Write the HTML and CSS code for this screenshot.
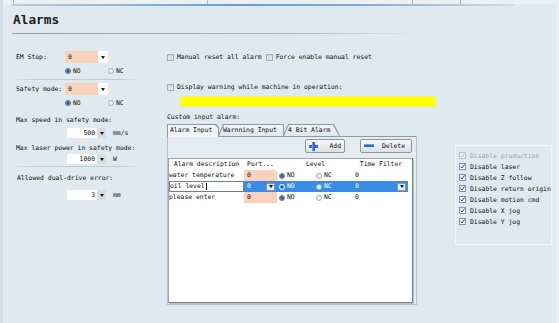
FILE: index.html
```html
<!DOCTYPE html>
<html lang="en">
<head>
  <meta charset="UTF-8" />
  <meta name="viewport" content="width=device-width, initial-scale=1.0" />
  <title>Alarms</title>
  <link rel="stylesheet" href="styles.css">
</head>
<body>
  <div class="frame">
    <!-- parent tab strip, cut off -->
    <div class="topbar">
      <span class="seg-a"></span>
      <span class="seg-b"></span>
      <span class="seg-c"></span>
      <span class="seg-d"></span>
    </div>
    <div class="topline"></div>

    <h1 class="title">Alarms</h1>
    <div class="title-rule"></div>

    <div class="content">
      <!-- Left: safety settings -->
      <div class="col-left">
        <div class="field-row">
          <span class="label">EM Stop:</span>
          <div class="select"><span class="value">0</span><span class="arrow"><i class="tri"></i></span></div>
        </div>
        <div class="radio-row">
          <span class="radio"><i class="dot on"></i>NO</span>
          <span class="radio"><i class="dot"></i>NC</span>
        </div>
        <div class="sep"></div>

        <div class="field-row gap-3">
          <span class="label">Safety mode:</span>
          <div class="select"><span class="value">0</span><span class="arrow"><i class="tri"></i></span></div>
        </div>
        <div class="radio-row gap-1">
          <span class="radio"><i class="dot on"></i>NO</span>
          <span class="radio"><i class="dot"></i>NC</span>
        </div>

        <div class="text-row gap-5">Max speed in safety mode:</div>
        <div class="spin-row gap-2">
          <div class="spin"><span class="value">500</span><span class="arrow"><i class="tri"></i></span></div>
          <span class="unit">mm/s</span>
        </div>

        <div class="text-row gap-4">Max laser power in safety mode:</div>
        <div class="spin-row">
          <div class="spin"><span class="value">1000</span><span class="arrow"><i class="tri"></i></span></div>
          <span class="unit">W</span>
        </div>
        <div class="sep wide gap-5"></div>

        <div class="text-row gap-5 indent">Allowed dual-drive error:</div>
        <div class="spin-row gap-6">
          <div class="spin"><span class="value">3</span><span class="arrow"><i class="tri"></i></span></div>
          <span class="unit">mm</span>
        </div>
      </div>

      <!-- Middle: reset options and custom alarms -->
      <div class="col-mid">
        <div class="check-row">
          <span class="check"><i class="box"></i>Manual reset all alarm</span>
          <span class="check"><i class="box"></i>Force enable manual reset</span>
        </div>
        <div class="check-row gap-18">
          <span class="check"><i class="box"></i>Display warning while machine in operation:</span>
        </div>
        <div class="warn-bar"></div>
        <div class="caption">Custom input alarm:</div>

        <div class="tabs">
          <div class="tab tab-first active"><span>Alarm Input</span></div>
          <div class="tab tab-mid"><span>Warnning Input</span></div>
          <div class="tab tab-last"><span>4 Bit Alarm</span></div>
        </div>
        <div class="tab-panel">
          <div class="btn-row">
            <button class="btn btn-add">
              <svg width="9" height="9" viewBox="0 0 9 9"><rect x="3" y="0" width="3" height="9" fill="#2b6bd3"/><rect x="0" y="3" width="9" height="3" fill="#2b6bd3"/><rect x="3" y="0" width="1" height="9" fill="#6f9fe8"/></svg>
              <span>Add</span>
            </button>
            <button class="btn btn-del">
              <svg width="10" height="4" viewBox="0 0 10 4"><rect x="0" y="0" width="10" height="3" fill="#2b6bd3"/><rect x="0" y="0" width="10" height="1" fill="#6f9fe8"/></svg>
              <span>Delete</span>
            </button>
          </div>

          <div class="grid">
            <div class="row head">
              <span class="c-desc">Alarm description</span>
              <span class="c-port">Port...</span>
              <span class="c-level">Level</span>
              <span class="c-time">Time Filter</span>
            </div>
            <div class="row">
              <span class="c-desc">water temperature</span>
              <span class="c-port pink">0</span>
              <span class="c-level"><span class="radio"><i class="dot on"></i>NO</span><span class="radio"><i class="dot"></i>NC</span></span>
              <span class="c-time">0</span>
            </div>
            <div class="row selected">
              <span class="c-desc edit">oil level<i class="caret"></i></span>
              <span class="c-port">0<span class="drop"><i class="tri"></i></span></span>
              <span class="c-level"><span class="radio"><i class="dot focus"></i>NO</span><span class="radio"><i class="dot"></i>NC</span></span>
              <span class="c-time">0<span class="drop"><i class="tri"></i></span></span>
            </div>
            <div class="row">
              <span class="c-desc">please enter</span>
              <span class="c-port pink">0</span>
              <span class="c-level"><span class="radio"><i class="dot on"></i>NO</span><span class="radio"><i class="dot"></i>NC</span></span>
              <span class="c-time">0</span>
            </div>
          </div>
        </div>
      </div>

      <!-- Right: actions disabled on alarm -->
      <div class="col-right">
        <div class="opt disabled"><i class="tick-box"><svg width="5" height="5" viewBox="0 0 5 5"><path d="M0.5 2.5 L2 4 L4.5 0.5" fill="none" stroke="#b7c0c7" stroke-width="1"/></svg></i>Disable production</div>
        <div class="opt"><i class="tick-box"><svg width="5" height="5" viewBox="0 0 5 5"><path d="M0.5 2.5 L2 4 L4.5 0.5" fill="none" stroke="#2c4d7a" stroke-width="1"/></svg></i>Disable laser</div>
        <div class="opt"><i class="tick-box"><svg width="5" height="5" viewBox="0 0 5 5"><path d="M0.5 2.5 L2 4 L4.5 0.5" fill="none" stroke="#2c4d7a" stroke-width="1"/></svg></i>Disable Z follow</div>
        <div class="opt"><i class="tick-box"><svg width="5" height="5" viewBox="0 0 5 5"><path d="M0.5 2.5 L2 4 L4.5 0.5" fill="none" stroke="#2c4d7a" stroke-width="1"/></svg></i>Disable return origin</div>
        <div class="opt"><i class="tick-box"><svg width="5" height="5" viewBox="0 0 5 5"><path d="M0.5 2.5 L2 4 L4.5 0.5" fill="none" stroke="#2c4d7a" stroke-width="1"/></svg></i>Disable motion cmd</div>
        <div class="opt"><i class="tick-box"><svg width="5" height="5" viewBox="0 0 5 5"><path d="M0.5 2.5 L2 4 L4.5 0.5" fill="none" stroke="#2c4d7a" stroke-width="1"/></svg></i>Disable X jog</div>
        <div class="opt"><i class="tick-box"><svg width="5" height="5" viewBox="0 0 5 5"><path d="M0.5 2.5 L2 4 L4.5 0.5" fill="none" stroke="#2c4d7a" stroke-width="1"/></svg></i>Disable Y jog</div>
      </div>
    </div>
  </div>
</body>
</html>
```

FILE: styles.css
```css
* {
  box-sizing: border-box;
}

body {
  margin: 0;
  background: #d3dfe6;
  font-family: "DejaVu Sans Mono", "Liberation Mono", monospace;
  font-size: 6.4px;
  color: #0d0d0d;
}

i {
  display: block;
  font-style: normal;
}

.frame {
  width: 559px;
  height: 323px;
  border-left: 3px solid #d3dfe6;
  border-right: 3px solid #e8eff3;
  background: #dfeaf0;
  overflow: hidden;
}

/* top strip */
.topbar {
  display: flex;
  height: 4px;
  background: #eaf1f5;
}

.topbar span {
  border-right: 1px solid #aab7c0;
}

.seg-a { width: 11px; }
.seg-b { width: 194px; }
.seg-c { width: 205px; }
.seg-d { width: 48px; }

.topline {
  height: 2px;
  margin: 0 42px 0 9px;
  background: linear-gradient(90deg, #b7cddd, #6f9cc6 45%, #86abcd 70%, #cfdde7);
}

.title {
  margin: 7px 0 0 10px;
  height: 14px;
  font-size: 12.8px;
  line-height: 14px;
  font-weight: bold;
  color: #1b1b1b;
}

.title-rule {
  margin: 6px 0 0 9px;
  width: 408px;
  height: 1px;
  background: linear-gradient(90deg, #8ea2ad, #a5b6c0 70%, rgba(165, 182, 192, 0));
}

.content {
  display: flex;
  margin-top: 17px;
  padding-left: 13px;
}

/* spacing helpers */
.gap-1 { margin-top: 1px; }
.gap-2 { margin-top: 2px; }
.gap-3 { margin-top: 3px; }
.gap-4 { margin-top: 4px; }
.gap-5 { margin-top: 5px; }
.gap-6 { margin-top: 6px; }
.gap-18 { margin-top: 18px; }

/* left column */
.col-left {
  width: 151px;
}

.field-row {
  display: flex;
  align-items: center;
  height: 12px;
}

.field-row .label {
  width: 49px;
}

.select {
  display: flex;
  width: 43px;
  height: 12px;
}

.select .value {
  width: 33px;
  padding-left: 3px;
  line-height: 12px;
  background: #fbd3bd;
}

.select .arrow,
.spin .arrow {
  flex: 1;
  display: flex;
  align-items: center;
  justify-content: center;
  background: #fff;
}

.tri {
  width: 0;
  height: 0;
  border-left: 2.5px solid transparent;
  border-right: 2.5px solid transparent;
  border-top: 3px solid #111;
}

.radio-row {
  display: flex;
  align-items: center;
  height: 12px;
  margin-top: 2px;
  padding-left: 49px;
}

.radio-row .radio {
  width: 43px;
}

.radio {
  display: flex;
  align-items: center;
  gap: 2px;
}

.dot {
  width: 6px;
  height: 6px;
  border-radius: 50%;
  border: 1px solid #a3adb5;
  background: #eef1f3;
}

.dot.on {
  border-color: #59728c;
  background: radial-gradient(circle, #3d5d82 0 40%, #87a0b8 75%, #c9d5df);
}

.dot.focus {
  border-color: #fff;
  background: radial-gradient(circle, #21508e 0 35%, #3a8de6 45%);
}

.sep {
  width: 122px;
  height: 1px;
  margin-top: 2px;
  background: linear-gradient(90deg, rgba(190, 205, 214, 0.3), #bfccd4 15%, #bfccd4 85%, rgba(190, 205, 214, 0));
}

.sep.wide {
  width: 125px;
}

.text-row {
  height: 12px;
  line-height: 12px;
}

.text-row.indent {
  padding-left: 1px;
}

.spin-row {
  display: flex;
  align-items: center;
  height: 10px;
  padding-left: 51px;
}

.spin {
  display: flex;
  width: 39px;
  height: 10px;
}

.spin .value {
  width: 30px;
  padding-right: 2px;
  line-height: 10px;
  text-align: right;
  background: #fff;
}

.spin .arrow {
  background: #dadee1;
}

.unit {
  margin-left: 7px;
}

/* middle column */
.col-mid {
  width: 270px;
}

.check-row {
  display: flex;
  align-items: center;
  height: 12px;
}

.check {
  display: flex;
  align-items: center;
  gap: 3px;
  margin-right: 4px;
}

.box {
  width: 7px;
  height: 7px;
  border: 1px solid #a2abb1;
  background: linear-gradient(#d3d8dc, #e9ecee);
}

.warn-bar {
  width: 256px;
  height: 11px;
  margin: 3px 0 0 13px;
  background: #ffff00;
  border: 1px solid #f1f16a;
}

.caption {
  height: 12px;
  margin-top: 4px;
  line-height: 12px;
}

.tabs {
  display: flex;
  align-items: flex-end;
  height: 12px;
  margin-top: 1px;
}

.tab {
  height: 12px;
  padding: 1px 1px 0 1px;
  background: #8e9ba4;
}

.tab span {
  display: block;
  height: 11px;
  line-height: 11px;
  background: linear-gradient(#eef3f6, #dfe8ee);
}

.tab.active {
  position: relative;
  z-index: 1;
  height: 13px;
  margin-bottom: -1px;
}

.tab.active span {
  height: 12px;
  background: #eef4f7;
}

.tab-first {
  width: 52px;
  clip-path: polygon(0 100%, 0 0, calc(100% - 3px) 0, 100% 3px, 100% 100%);
}

.tab-first span {
  padding-left: 2px;
  clip-path: polygon(0 100%, 0 0, calc(100% - 3px) 0, 100% 3px, 100% 100%);
}

.tab-mid {
  width: 66px;
  margin-left: -1px;
  clip-path: polygon(0 100%, 5px 0, 100% 0, 100% 100%);
}

.tab-mid span {
  padding-left: 4px;
  clip-path: polygon(0 100%, 5px 0, 100% 0, 100% 100%);
}

.tab-last {
  width: 57px;
  margin-left: -1px;
  clip-path: polygon(0 100%, 5px 0, calc(100% - 6px) 0, 100% 100%);
}

.tab-last span {
  padding-left: 4px;
  clip-path: polygon(0 100%, 5px 0, calc(100% - 6px) 0, 100% 100%);
}

.tab-panel {
  width: 250px;
  height: 169px;
  border: 1px solid #b3c0c8;
  border-top-color: #8e9ba4;
  background: #e2ecf1;
}

.btn-row {
  display: flex;
  justify-content: flex-end;
  gap: 15px;
  margin-top: 2px;
  padding-right: 4px;
}

.btn {
  display: flex;
  align-items: center;
  justify-content: space-between;
  height: 14px;
  padding: 0 3px;
  font: inherit;
  color: #111;
  border: 1px solid #8b979f;
  border-radius: 2px;
  background: linear-gradient(#f7f8f9, #dde1e4);
}

.btn-add {
  width: 40px;
}

.btn-del {
  width: 52px;
  padding-right: 6px;
}

.grid {
  width: 245px;
  height: 145px;
  margin-top: 5px;
  border: 1px solid #9ea7ad;
  border-right-color: #737c82;
  border-bottom-color: #737c82;
  box-shadow: 1px 1px 0 #b9c4ca;
  background: #fff;
}

.row {
  display: grid;
  grid-template-columns: 75px 33px 77px 54px;
  height: 11px;
  line-height: 11px;
}

.row.head {
  text-align: center;
}

.row > span {
  white-space: nowrap;
}

.row .c-port {
  padding-left: 3px;
}

.row.head .c-port {
  padding-left: 0;
}

.pink {
  background: #fbd3bd;
}

.row .c-level {
  display: flex;
  align-items: center;
  padding-left: 2px;
}

.row .c-level .radio {
  width: 37px;
}

.row.head .c-level {
  display: block;
  padding-left: 0;
}

.row .c-time {
  padding-left: 1px;
}

.row.head .c-time {
  padding-left: 0;
}

.row.selected .c-port,
.row.selected .c-level,
.row.selected .c-time {
  display: flex;
  align-items: center;
  background: #3a8de6;
  color: #fff;
}

.row.selected .c-port,
.row.selected .c-time {
  justify-content: space-between;
  padding-right: 2px;
}

.c-desc.edit {
  display: flex;
  align-items: center;
  border: 1px solid #6f8090;
  line-height: 9px;
}

.caret {
  width: 1px;
  height: 7px;
  margin-left: 1px;
  background: #111;
}

.drop {
  display: flex;
  align-items: center;
  justify-content: center;
  width: 9px;
  height: 8px;
  border: 1px solid #8c969e;
  background: #e4e8eb;
}

/* right column */
.col-right {
  width: 97px;
  height: 100px;
  margin: 94px 0 0 18px;
  padding: 4px 0 0 3px;
  border: 1px solid rgba(255, 255, 255, 0.55);
}

.opt {
  display: flex;
  align-items: center;
  gap: 4px;
  height: 11px;
  white-space: nowrap;
}

.tick-box {
  display: flex;
  align-items: center;
  justify-content: center;
  width: 7px;
  height: 7px;
  border: 1px solid #7f93ad;
  background: linear-gradient(#e6ebf0, #fbfcfd);
}

.opt.disabled {
  color: #9aa4ab;
}

.opt.disabled .tick-box {
  border-color: #b9c3cb;
  background: #edf1f4;
}
```
